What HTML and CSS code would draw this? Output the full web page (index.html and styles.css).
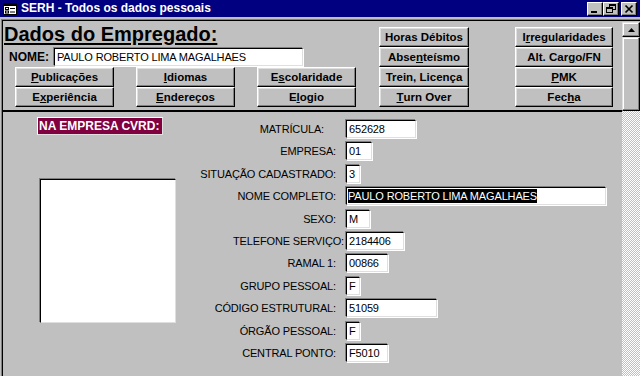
FILE: index.html
```html
<!DOCTYPE html>
<html lang="pt">
<head>
<meta charset="utf-8">
<title>SERH - Todos os dados pessoais</title>
<link rel="stylesheet" href="styles.css">
</head>
<body>
<div class="window">
  <div class="titlebar">
    <svg class="app-icon" width="14" height="12" viewBox="0 0 14 12">
      <rect x="0.5" y="0.5" width="13" height="11" fill="#fff" stroke="#000"/>
      <rect x="0" y="0" width="14" height="3" fill="#000"/>
      <rect x="2.5" y="4.5" width="3" height="2" fill="none" stroke="#000"/>
      <rect x="2.5" y="8" width="3" height="2" fill="none" stroke="#000"/>
      <rect x="7" y="5" width="5" height="1" fill="#000"/>
      <rect x="7" y="8.5" width="5" height="1" fill="#000"/>
    </svg>
    <span class="title">SERH - Todos os dados pessoais</span>
    <div class="controls">
      <span class="ctl">
        <svg width="14" height="12" viewBox="0 0 14 12"><rect x="3" y="8" width="6" height="2" fill="#000"/></svg>
      </span>
      <span class="ctl">
        <svg width="14" height="12" viewBox="0 0 14 12">
          <rect x="5.5" y="1.5" width="6" height="5" fill="none" stroke="#000"/>
          <rect x="5" y="1" width="7" height="2" fill="#000"/>
          <rect x="2.5" y="4.5" width="6" height="5" fill="#c0c0c0" stroke="#000"/>
          <rect x="2" y="4" width="7" height="2" fill="#000"/>
        </svg>
      </span>
      <span class="ctl ctl-close">
        <svg width="14" height="12" viewBox="0 0 14 12"><path d="M3.5 2.5 L10.5 9.5 M10.5 2.5 L3.5 9.5" stroke="#000" stroke-width="1.7"/></svg>
      </span>
    </div>
  </div>

  <div class="client">
    <div class="client-in">
      <div class="form">
        <div class="header">
          <div class="hleft">
            <h1 class="heading">Dados do Empregado:</h1>
            <div class="nome-row">
              <span class="nome-label">NOME:</span>
              <div class="field w249">PAULO ROBERTO LIMA MAGALHAES</div>
            </div>
            <div class="btn-grid">
              <button class="btn"><u>P</u>ublicações</button>
              <button class="btn"><u>I</u>diomas</button>
              <button class="btn">E<u>s</u>colaridade</button>
              <button class="btn">E<u>x</u>periência</button>
              <button class="btn"><u>E</u>ndereços</button>
              <button class="btn">E<u>l</u>ogio</button>
            </div>
          </div>
          <div class="hcol">
            <button class="btn">Horas Débitos</button>
            <button class="btn">Abse<u>n</u>teísmo</button>
            <button class="btn">Trein, Licença</button>
            <button class="btn"><u>T</u>urn Over</button>
          </div>
          <div class="hcol hcol2">
            <button class="btn">I<u>r</u>regularidades</button>
            <button class="btn">Alt. Car<u>g</u>o/FN</button>
            <button class="btn"><u>P</u>MK</button>
            <button class="btn">Fec<u>h</u>a</button>
          </div>
        </div>

        <div class="detail">
          <div class="dleft">
            <div class="badge">NA EMPRESA CVRD:</div>
            <div class="photo"></div>
          </div>
          <div class="fields">
            <span class="lbl lbl-mat">MATRÍCULA:</span><div class="field w70">652628</div>
            <span class="lbl">EMPRESA:</span><div class="field w26">01</div>
            <span class="lbl">SITUAÇÃO CADASTRADO:</span><div class="field w14">3</div>
            <span class="lbl">NOME COMPLETO:</span><div class="field w260 sel-field"><span class="sel">PAULO ROBERTO LIMA MAGALHAES</span></div>
            <span class="lbl">SEXO:</span><div class="field w24">M</div>
            <span class="lbl lbl-tel">TELEFONE SERVIÇO:</span><div class="field w57">2184406</div>
            <span class="lbl">RAMAL 1:</span><div class="field w42">00866</div>
            <span class="lbl">GRUPO PESSOAL:</span><div class="field w14">F</div>
            <span class="lbl">CÓDIGO ESTRUTURAL:</span><div class="field w91">51059</div>
            <span class="lbl">ÓRGÃO PESSOAL:</span><div class="field w14">F</div>
            <span class="lbl">CENTRAL PONTO:</span><div class="field w42">F5010</div>
          </div>
        </div>
      </div>

      <div class="vscroll">
        <div class="sb-btn">
          <svg width="7" height="4" viewBox="0 0 7 4"><path d="M3.5 0 L7 4 H0 Z" fill="#000"/></svg>
        </div>
        <div class="sb-thumb"></div>
        <div class="sb-track"></div>
      </div>
    </div>
  </div>
</div>
</body>
</html>
```

FILE: styles.css
```css
* { box-sizing: border-box; }

html, body {
  margin: 0;
  padding: 0;
}

body {
  width: 640px;
  height: 376px;
  overflow: hidden;
  background: #c0c0c0;
  font-family: "Liberation Sans", Arial, sans-serif;
  color: #000;
}

.window {
  width: 640px;
  height: 376px;
  display: flex;
  flex-direction: column;
}

/* ---------- title bar ---------- */
.titlebar {
  flex: none;
  height: 17px;
  background: #000080;
  color: #fff;
  display: flex;
  align-items: flex-start;
}

.app-icon {
  margin: 3px 0 0 3px;
  flex: none;
}

.title {
  margin-left: 4px;
  font-weight: bold;
  font-size: 12px;
  line-height: 17px;
  white-space: nowrap;
}

.controls {
  margin-left: auto;
  padding: 2px 3px 0 0;
  display: flex;
}

.ctl {
  width: 16px;
  height: 14px;
  background: #c0c0c0;
  border: 1px solid;
  border-color: #fff #000 #000 #fff;
  box-shadow: inset -1px -1px #808080;
  display: flex;
  align-items: center;
  justify-content: center;
}

.ctl-close {
  margin-left: 2px;
}

/* ---------- client area ---------- */
.client {
  flex: 1;
  min-height: 0;
  margin: 2px 0 0 1px;
  border-top: 1px solid #808080;
  border-left: 1px solid #808080;
  display: flex;
}

.client-in {
  flex: 1;
  min-width: 0;
  border-top: 1px solid #000;
  border-left: 1px solid #000;
  display: flex;
}

.form {
  width: 619px;
  display: flex;
  flex-direction: column;
}

/* ---------- header ---------- */
.header {
  flex: none;
  height: 91px;
  border-bottom: 2px solid #000;
  display: flex;
  align-items: flex-start;
}

.hleft {
  width: 356px;
  display: flex;
  flex-direction: column;
}

.heading {
  margin: 1px 0 0 1px;
  font-size: 20px;
  line-height: 24px;
  font-weight: bold;
  text-decoration: underline;
  text-decoration-thickness: 2px;
  text-underline-offset: 2px;
  white-space: nowrap;
}

.nome-row {
  margin-top: 2px;
  height: 18px;
  display: flex;
  align-items: center;
}

.nome-label {
  width: 51px;
  padding-left: 6px;
  font-weight: bold;
  font-size: 12px;
}

.btn-grid {
  margin: 1px 0 0 12px;
  display: grid;
  grid-template-columns: 99px 99px 99px;
  grid-auto-rows: 20px;
  column-gap: 22px;
}

.hcol {
  margin: 6px 0 0 20px;
  width: 90px;
  display: flex;
  flex-direction: column;
}

.hcol2 {
  margin-left: 46px;
  width: 98px;
}

.btn {
  height: 20px;
  margin: 0;
  padding: 0;
  background: #c0c0c0;
  border: 1px solid;
  border-color: #fff #000 #000 #fff;
  box-shadow: inset -1px -1px #808080, inset 1px 1px #dfdfdf;
  color: #000;
  font-family: "Liberation Sans", Arial, sans-serif;
  font-weight: bold;
  font-size: 11.5px;
  white-space: nowrap;
  display: flex;
  align-items: center;
  justify-content: center;
}

/* ---------- text fields ---------- */
.field {
  flex: none;
  height: 18px;
  background: #fff;
  border: 1px solid;
  border-color: #000 #dfdfdf #dfdfdf #000;
  box-shadow: -1px -1px 0 #808080, 1px 1px 0 #fff;
  padding: 0 2px;
  font-size: 11px;
  letter-spacing: -0.15px;
  line-height: 16px;
  white-space: nowrap;
  overflow: hidden;
}

.w14 { width: 14px; }
.w24 { width: 24px; }
.w26 { width: 26px; }
.w42 { width: 42px; }
.w57 { width: 58px; }
.w70 { width: 70px; }
.w91 { width: 91px; }
.w249 { width: 249px; }
.w260 { width: 260px; }

.sel-field {
  padding-left: 1px;
}

.sel {
  display: inline-block;
  vertical-align: top;
  background: #000;
  color: #fff;
  line-height: 14px;
  margin-top: 1px;
}

/* ---------- detail ---------- */
.detail {
  flex: 1;
  display: flex;
  align-items: flex-start;
}

.dleft {
  width: 190px;
  padding: 5px 0 0 34px;
  display: flex;
  flex-direction: column;
  align-items: flex-start;
}

.badge {
  width: 126px;
  height: 18px;
  background: #800040;
  color: #fff;
  border: 1px solid;
  border-color: #fff #dfdfdf #dfdfdf #fff;
  padding-left: 1px;
  font-weight: bold;
  font-size: 12px;
  line-height: 16px;
  white-space: nowrap;
}

.photo {
  margin: 44px 0 0 3px;
  width: 136px;
  height: 144px;
  background: #fff;
  border: 1px solid;
  border-color: #000 #dfdfdf #dfdfdf #000;
  box-shadow: -1px -1px 0 #808080;
}

.fields {
  padding-top: 8px;
  display: grid;
  grid-template-columns: 143px max-content;
  grid-auto-rows: 18px;
  column-gap: 10px;
  row-gap: 4.4px;
  align-items: center;
}

.fields .field {
  justify-self: start;
}

.lbl {
  text-align: right;
  font-size: 11px;
  letter-spacing: -0.15px;
  line-height: 18px;
  white-space: nowrap;
}

.lbl-mat {
  padding-right: 12px;
}

.lbl-tel {
  margin-right: -8px;
}

/* ---------- scrollbar ---------- */
.vscroll {
  width: 18px;
  display: flex;
  flex-direction: column;
}

.sb-btn,
.sb-thumb {
  background: #c0c0c0;
  border: 1px solid;
  border-color: #dfdfdf #000 #000 #dfdfdf;
  box-shadow: inset -1px -1px #808080, inset 1px 1px #fff;
}

.sb-btn {
  margin-top: 1px;
  height: 15px;
  display: flex;
  align-items: center;
  justify-content: center;
}

.sb-thumb {
  height: 74px;
}

.sb-track {
  flex: 1;
  background: repeating-conic-gradient(#fff 0 25%, #c0c0c0 0 50%) 0 0 / 2px 2px;
}
```
